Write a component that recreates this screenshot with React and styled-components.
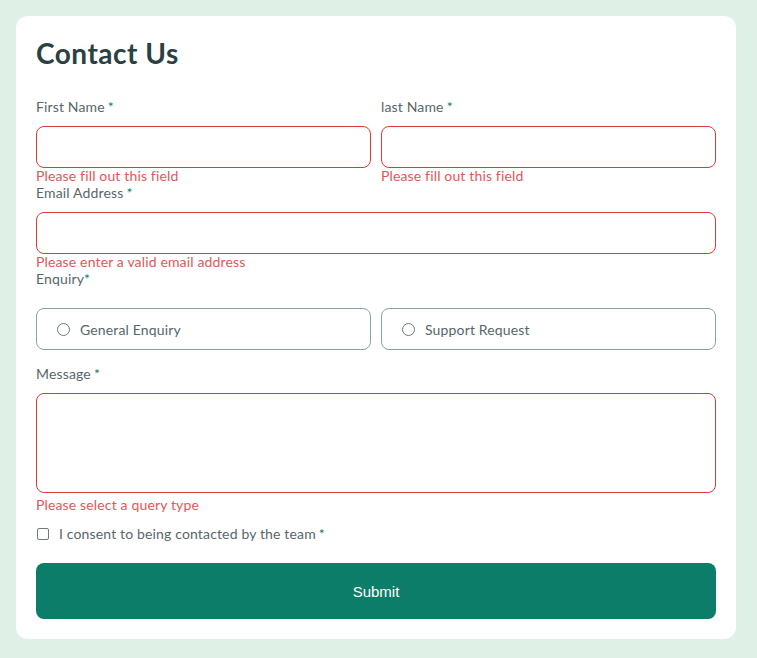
import styled, { createGlobalStyle } from "styled-components";

const GlobalStyle = createGlobalStyle`
  * { box-sizing: border-box; }
  body {
    margin: 0;
    background: #dff0e6;
    font-family: "Lato", "Noto Sans", sans-serif;
  }
`;

const Page = styled.div`
  padding: 16px 21px 20px 16px;
  min-height: 100vh;
`;

const Card = styled.form`
  background: #ffffff;
  border-radius: 12px;
  padding: 20px;
  display: flex;
  flex-direction: column;
`;

const Title = styled.h1`
  margin: 0 0 29px;
  font-size: 28px;
  line-height: 34px;
  font-weight: 700;
  color: #2a4144;
  letter-spacing: 0.5px;
`;

const Row = styled.div`
  display: grid;
  grid-template-columns: 1fr 1fr;
  gap: 10px;
`;

const Field = styled.div`
  display: flex;
  flex-direction: column;
`;

const Label = styled.label`
  font-size: 14px;
  line-height: 16px;
  letter-spacing: 0.15px;
  color: #56676a;
  margin-bottom: ${(p) => p.$gap || 11}px;
`;

const Star = styled.span`
  color: #0c7d69;
  margin-left: ${(p) => (p.$tight ? 0 : 3)}px;
`;

const Input = styled.input`
  height: 42px;
  width: 100%;
  border: 1px solid #d73c3c;
  border-radius: 8px;
  outline: none;
  font: inherit;
  padding: 0 12px;
  background: #fff;
`;

const TextArea = styled.textarea`
  display: block;
  height: 100px;
  width: 100%;
  border: 1px solid #d73c3c;
  border-radius: 8px;
  outline: none;
  resize: none;
  font: inherit;
  padding: 10px 12px;
`;

const Error = styled.span`
  font-size: 14px;
  line-height: 16px;
  letter-spacing: 0.15px;
  color: #e05858;
  margin-top: ${(p) => p.$top || 0}px;
  margin-bottom: 1px;
`;

const Options = styled(Row)`
  margin-bottom: 16px;
`;

const Option = styled.label`
  display: flex;
  align-items: center;
  gap: 10px;
  height: 42px;
  padding: 0 20px;
  border: 1px solid #87a3a6;
  border-radius: 8px;
  font-size: 14px;
  letter-spacing: 0.15px;
  color: #56676a;
  cursor: pointer;
`;

const Radio = styled.span`
  width: 13px;
  height: 13px;
  border: 1px solid #6e7a7c;
  border-radius: 50%;
  flex-shrink: 0;
`;

const Consent = styled.label`
  display: flex;
  align-items: center;
  gap: 10px;
  margin: 12px 0 21px 1px;
  font-size: 14px;
  line-height: 16px;
  letter-spacing: 0.15px;
  color: #56676a;
`;

const Box = styled.span`
  width: 12px;
  height: 12px;
  border: 1px solid #6e7a7c;
  border-radius: 2px;
  flex-shrink: 0;
`;

const Submit = styled.button`
  height: 56px;
  border: none;
  border-radius: 8px;
  background: #0c7d69;
  color: #fff;
  font-family: "Liberation Sans", Arial, sans-serif;
  font-size: 15px;
  font-weight: 400;
  cursor: pointer;
`;

export default function App() {
  return (
    <>
      <GlobalStyle />
      <Page>
        <Card onSubmit={(e) => e.preventDefault()}>
          <Title>Contact Us</Title>
          <Row>
            <Field>
              <Label>
                First Name<Star>*</Star>
              </Label>
              <Input />
              <Error>Please fill out this field</Error>
            </Field>
            <Field>
              <Label>
                last Name<Star>*</Star>
              </Label>
              <Input />
              <Error>Please fill out this field</Error>
            </Field>
          </Row>
          <Field>
            <Label>
              Email Address<Star>*</Star>
            </Label>
            <Input />
            <Error>Please enter a valid email address</Error>
          </Field>
          <Label $gap={21}>
            Enquiry<Star $tight>*</Star>
          </Label>
          <Options>
            <Option>
              <Radio />
              General Enquiry
            </Option>
            <Option>
              <Radio />
              Support Request
            </Option>
          </Options>
          <Field>
            <Label>
              Message<Star>*</Star>
            </Label>
            <TextArea />
            <Error $top={4}>Please select a query type</Error>
          </Field>
          <Consent>
            <Box />
            <span>
              I consent to being contacted by the team<Star>*</Star>
            </span>
          </Consent>
          <Submit type="submit">Submit</Submit>
        </Card>
      </Page>
    </>
  );
}
